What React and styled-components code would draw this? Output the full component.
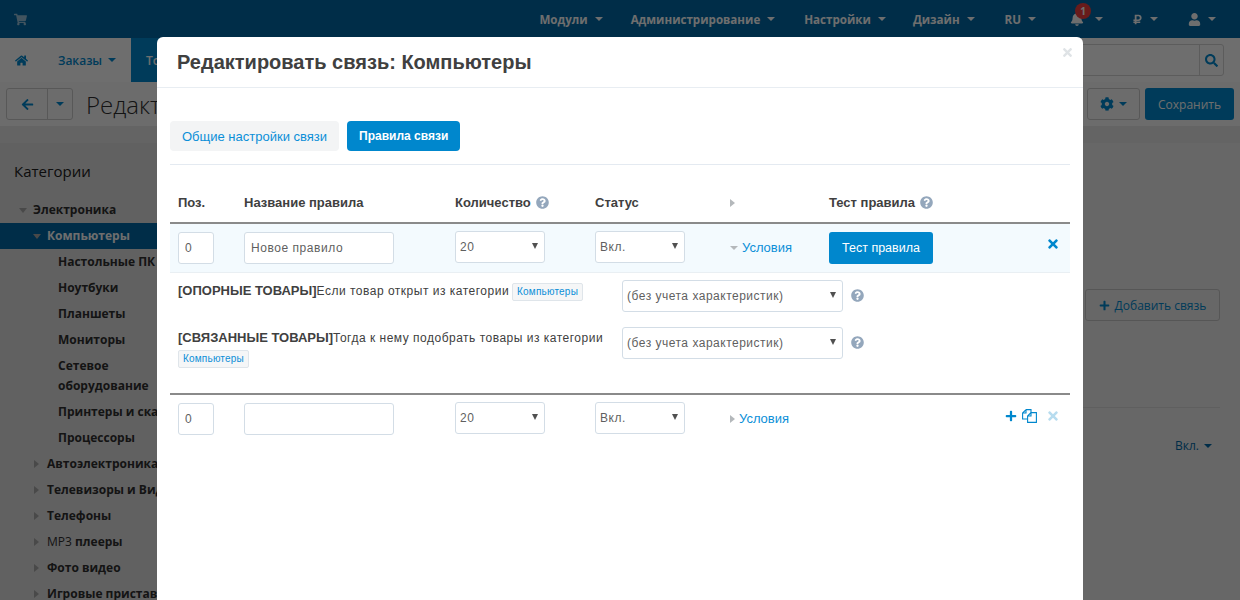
import React from "react";
import styled, { createGlobalStyle } from "styled-components";
import {
  FaShoppingCart,
  FaHome,
  FaArrowLeft,
  FaSearch,
  FaCog,
  FaBell,
  FaUser,
  FaPlus,
  FaTimes,
  FaQuestionCircle,
  FaRubleSign,
} from "react-icons/fa";

const GlobalStyle = createGlobalStyle`
  html, body {
    margin: 0;
    height: 600px;
    overflow: hidden;
    background: #fff;
    font-family: "Open Sans", sans-serif;
  }
  * { box-sizing: border-box; }
`;

// page behind the modal
const Page = styled.div`
  height: 600px;
  overflow: hidden;
  color: #404040;
`;

const TopBar = styled.div`
  height: 38px;
  background: #006aa8;
  display: flex;
  align-items: center;
  justify-content: space-between;
  padding: 0 24px 0 14px;
  color: #fff;
`;

const CartIcon = styled.span`
  display: flex;
  opacity: 0.6;
`;

const TopMenu = styled.div`
  display: flex;
  align-items: center;
`;

const TopItem = styled.div`
  display: flex;
  align-items: center;
  gap: ${(props) => props.$inner || 7}px;
  margin-left: ${(props) => props.$gap || 30}px;
  font-size: 11.6px;
  font-weight: 700;
  position: relative;
`;

const Caret = styled.span`
  display: inline-block;
  width: 0;
  height: 0;
  border-left: 4px solid transparent;
  border-right: 4px solid transparent;
  border-top: 4px solid currentColor;
`;

const Badge = styled.span`
  position: absolute;
  left: 5px;
  top: -9px;
  width: 16px;
  height: 16px;
  border-radius: 50%;
  background: #f04040;
  color: #fff;
  font-size: 10px;
  line-height: 16px;
  text-align: center;
`;

const NavBar = styled.div`
  height: 44px;
  display: flex;
  align-items: center;
  background: #fff;
  padding-right: 16px;
`;

const NavHome = styled.div`
  width: 43px;
  padding-left: 15px;
  color: #008ad0;
  font-size: 13px;
  display: flex;
`;

const NavLink = styled.div`
  height: 44px;
  display: flex;
  align-items: center;
  gap: 6px;
  font-size: 12px;
  font-weight: 600;
  padding: 0 15px;
  color: ${(props) => (props.$active ? "#fff" : "#008ad0")};
  background: ${(props) => (props.$active ? "#008ad0" : "transparent")};
`;

const SearchBox = styled.div`
  margin-left: auto;
  width: 400px;
  height: 32px;
  display: flex;
  border: 1px solid #d5d5d5;
  border-radius: 3px;
  justify-content: flex-end;
`;

const SearchButton = styled.div`
  width: 24px;
  border-left: 1px solid #d5d5d5;
  color: #008ad0;
  font-size: 13px;
  display: flex;
  align-items: center;
  justify-content: center;
`;

const ToolBar = styled.div`
  height: 44px;
  display: flex;
  align-items: center;
  background: #fbfbfb;
  padding: 0 6px;
`;

const BackGroup = styled.div`
  display: flex;
  height: 32px;
  border: 1px solid #ccc;
  border-radius: 3px;
  color: #008ad0;
`;

const BackPart = styled.div`
  width: ${(props) => props.$width}px;
  display: flex;
  align-items: center;
  justify-content: center;
  font-size: 13px;
  & + & { border-left: 1px solid #ccc; }
`;

const PageTitle = styled.div`
  margin-left: 13px;
  font-size: 24px;
  font-weight: 300;
  color: #303030;
`;

const ToolActions = styled.div`
  margin-left: auto;
  display: flex;
  gap: 5px;
`;

const GearButton = styled.div`
  width: 53px;
  height: 32px;
  border: 1px solid #ccc;
  border-radius: 3px;
  color: #008ad0;
  display: flex;
  align-items: center;
  justify-content: center;
  gap: 5px;
  font-size: 13px;
`;

const SaveButton = styled.div`
  width: 89px;
  height: 32px;
  border-radius: 3px;
  background: #008ad0;
  color: #fff;
  font-size: 12px;
  display: flex;
  align-items: center;
  justify-content: center;
`;

const Strip = styled.div`
  height: 17px;
  background: #e8e8e8;
`;

const Content = styled.div`
  display: flex;
`;

const Sidebar = styled.div`
  width: 200px;
  flex: none;
  background: #e0e0e0;
  height: 460px;
`;

const SideTitle = styled.div`
  font-size: 15px;
  padding: 18px 14px 0;
  height: 54px;
  color: #202020;
`;

const TreeItem = styled.div`
  display: flex;
  align-items: flex-start;
  font-size: 12px;
  font-weight: 700;
  line-height: 20px;
  padding: 3px 0 3px ${(props) => props.$indent}px;
  color: ${(props) => (props.$active ? "#fff" : "#303030")};
  background: ${(props) => (props.$active ? "#006aa8" : "transparent")};
  white-space: pre-line;
`;

const TreeLabel = styled.span`
  white-space: pre-line;
`;

const PlainPart = styled.span`
  font-weight: 400;
`;

const TreeArrow = styled.span`
  flex: none;
  width: 14px;
  &::before {
    content: "";
    display: block;
    width: 0;
    height: 0;
    ${(props) =>
      props.$open
        ? "border-left: 4px solid transparent; border-right: 4px solid transparent; border-top: 5px solid #aaa; margin-top: 8px;"
        : "border-top: 4px solid transparent; border-bottom: 4px solid transparent; border-left: 5px solid #aaa; margin-left: 1px; margin-top: 6px;"}
  }
`;

const Main = styled.div`
  flex: 1;
  display: flex;
  flex-direction: column;
  align-items: flex-end;
  background: #eeeeee;
  padding: 146px 20px 0 0;
`;

const AddLink = styled.div`
  width: 135px;
  height: 32px;
  border: 1px solid #c8c8c8;
  border-radius: 3px;
  color: #008ad0;
  font-size: 12px;
  display: flex;
  align-items: center;
  justify-content: center;
  gap: 5px;
`;

const MainRule = styled.div`
  width: 200px;
  margin-top: 86px;
  border-top: 1px solid #dcdcdc;
`;

const StateLabel = styled.div`
  margin: 29px 8px 0 0;
  font-size: 12px;
  color: #006aa8;
  display: flex;
  align-items: center;
  gap: 5px;
`;

// modal
const Backdrop = styled.div`
  position: fixed;
  inset: 0;
  background: rgba(0, 0, 0, 0.57);
`;

const Modal = styled.div`
  position: fixed;
  left: 157px;
  top: 37px;
  width: 926px;
  height: 600px;
  background: #fff;
  border-radius: 6px 6px 0 0;
  font-family: "Liberation Sans", Arial, sans-serif;
  color: #404040;
`;

const ModalHeader = styled.div`
  height: 51px;
  padding: 12px 20px 0;
  border-bottom: 1px solid #e8edf2;
  font-size: 20px;
  font-weight: 700;
  line-height: 26px;
`;

const CloseMark = styled.div`
  position: absolute;
  right: 9px;
  top: 9px;
  color: #dfe3e6;
  font-size: 13px;
  display: flex;
`;

const ModalBody = styled.div`
  padding: 33px 13px 0;
`;

const Tabs = styled.div`
  display: flex;
  gap: 8px;
  padding-bottom: 13px;
  border-bottom: 1px solid #e4eaf1;
`;

const Tab = styled.div`
  height: 30px;
  padding: 0 12px;
  display: flex;
  align-items: center;
  border-radius: 4px;
  font-size: ${(props) => (props.$active ? 12 : 13)}px;
  font-weight: ${(props) => (props.$active ? 700 : 400)};
  color: ${(props) => (props.$active ? "#fff" : "#0b8fd8")};
  background: ${(props) => (props.$active ? "#0087cd" : "#f3f4f5")};
`;

const Row = styled.div`
  display: grid;
  grid-template-columns: 66px 211px 140px 135px 99px 1fr;
  padding: 0 10px 0 8px;
  align-items: center;
`;

const HeadRow = styled(Row)`
  height: 59px;
  padding-top: 18px;
  border-bottom: 2px solid #8a8a8a;
  font-size: 13px;
  font-weight: 700;
`;

const HeadCell = styled.div`
  display: flex;
  align-items: center;
  gap: 5px;
`;

const RuleRow = styled(Row)`
  height: ${(props) => props.$height}px;
  background: ${(props) => (props.$open ? "#f3fafe" : "#fff")};
  border-bottom: ${(props) => (props.$open ? "1px solid #e9eff3" : "none")};
`;

const Input = styled.input`
  display: block;
  height: 32px;
  width: ${(props) => props.$width}px;
  border: 1px solid #d3dde6;
  border-radius: 3px;
  background: #fff;
  padding: 0 6px;
  font: 12px "Liberation Sans", Arial, sans-serif;
  letter-spacing: 0.55px;
  color: #5f5f5f;
`;

const SelectWrap = styled.div`
  position: relative;
  width: ${(props) => props.$width}px;
  margin-top: ${(props) => props.$lift || 0}px;
  &::after {
    content: "";
    position: absolute;
    right: 7px;
    top: 12px;
    border-left: 3px solid transparent;
    border-right: 3px solid transparent;
    border-top: 6px solid #505050;
    pointer-events: none;
  }
`;

const Select = styled.select`
  appearance: none;
  display: block;
  width: 100%;
  height: 32px;
  border: 1px solid #d3dde6;
  border-radius: 3px;
  background: #fff;
  padding: 0 4px;
  font: 12px "Liberation Sans", Arial, sans-serif;
  letter-spacing: 0.5px;
  color: #5f5f5f;
`;

const ConditionLink = styled.div`
  display: flex;
  align-items: center;
  gap: 4px;
  font-size: 13px;
  color: #0b8fd8;
  margin-top: -1px;
`;

const ArrowRight = styled.span`
  display: inline-block;
  width: 0;
  height: 0;
  border-top: 4px solid transparent;
  border-bottom: 4px solid transparent;
  border-left: 5px solid #b4b8bb;
`;

const ArrowDown = styled.span`
  display: inline-block;
  width: 0;
  height: 0;
  border-left: 4px solid transparent;
  border-right: 4px solid transparent;
  border-top: 4px solid #b4b8bb;
`;

const TestCell = styled.div`
  display: flex;
  justify-content: space-between;
`;

const TestButton = styled.div`
  width: 104px;
  height: 32px;
  border-radius: 3px;
  background: #0087cd;
  color: #fff;
  font-size: 12.5px;
  display: flex;
  align-items: center;
  justify-content: center;
`;

const RowActions = styled.div`
  display: flex;
  justify-content: flex-end;
  align-items: center;
  gap: 5px;
  height: 24px;
  margin-top: ${(props) => props.$top}px;
  color: #0087cd;
  font-size: 14px;
`;

const FadedX = styled.span`
  display: flex;
  margin-left: 4px;
  color: #b7dcef;
`;

const Details = styled.div`
  padding: 7px 0 0 8px;
  height: 122px;
  border-bottom: 2px solid #8a8a8a;
`;

const DetailRow = styled.div`
  display: flex;
  margin-bottom: ${(props) => props.$mb || 0}px;
`;

const DetailText = styled.div`
  width: 444px;
  flex: none;
  padding-top: 1px;
  font-size: 12px;
  line-height: 20px;
  letter-spacing: 0.5px;
`;

const Strong = styled.b`
  font-size: 13px;
  letter-spacing: 0;
`;

const Chip = styled.span`
  display: inline-block;
  font-size: 10px;
  line-height: 16px;
  padding: 0 4px;
  color: #0b8fd8;
  background: #f5f6f7;
  border: 1px solid #dfe5ea;
  border-radius: 2px;
  margin-left: ${(props) => props.$ml || 0}px;
  letter-spacing: 0.2px;
  vertical-align: middle;
`;

const Hint = styled.span`
  display: flex;
  color: #94a7bc;
  font-size: 13px;
  margin: ${(props) => props.$top || 0}px 0 0 ${(props) => props.$left || 0}px;
`;

const tree = [
  { text: "Компьютеры", indent: 33, open: true, active: true },
  { text: "Настольные ПК", indent: 58, leaf: true },
  { text: "Ноутбуки", indent: 58, leaf: true },
  { text: "Планшеты", indent: 58, leaf: true },
  { text: "Мониторы", indent: 58, leaf: true },
  { text: "Сетевое\nоборудование", indent: 58, leaf: true },
  { text: "Принтеры и сканеры", indent: 58, leaf: true },
  { text: "Процессоры", indent: 58, leaf: true },
  { text: "Автоэлектроника", indent: 33 },
  { text: "Телевизоры и Видео", indent: 33 },
  { text: "Телефоны", indent: 33 },
  { text: "плееры", plain: "MP3 ", indent: 33 },
  { text: "Фото видео", indent: 33 },
  { text: "Игровые приставки", indent: 33 },
];

function CopyIcon() {
  return (
    <svg width="15" height="14" viewBox="0 0 15 14" fill="none" stroke="currentColor" strokeWidth="1.1">
      <path d="M4 .6H9V3.6M4 .6L.6 4V10H5.6M4 .6V4H.6" />
      <path d="M9 3.6H14.4V13.4H5.6V7L9 3.6ZM9 3.6V7H5.6" />
    </svg>
  );
}

function StatusSelect() {
  return (
    <SelectWrap $width={90} $lift={-2}>
      <Select defaultValue="on">
        <option value="on">Вкл.</option>
      </Select>
    </SelectWrap>
  );
}

function CountSelect() {
  return (
    <SelectWrap $width={90} $lift={-2}>
      <Select defaultValue="20">
        <option value="20">20</option>
      </Select>
    </SelectWrap>
  );
}

function FeatureSelect() {
  return (
    <SelectWrap $width={221}>
      <Select defaultValue="none">
        <option value="none">(без учета характеристик)</option>
      </Select>
    </SelectWrap>
  );
}

export default function App() {
  return (
    <>
      <GlobalStyle />
      <Page>
        <TopBar>
          <CartIcon><FaShoppingCart size={13} /></CartIcon>
          <TopMenu>
            <TopItem>Модули <Caret /></TopItem>
            <TopItem $gap={28}>Администрирование <Caret /></TopItem>
            <TopItem $gap={29}>Настройки <Caret /></TopItem>
            <TopItem $gap={27}>Дизайн <Caret /></TopItem>
            <TopItem $gap={30}>RU <Caret /></TopItem>
            <TopItem $gap={34} $inner={11}>
              <FaBell size={14} />
              <Badge>1</Badge>
              <Caret />
            </TopItem>
            <TopItem $gap={29}><FaRubleSign size={11} /> <Caret /></TopItem>
            <TopItem $gap={30}><FaUser size={13} /> <Caret /></TopItem>
          </TopMenu>
        </TopBar>
        <NavBar>
          <NavHome><FaHome size={13} /></NavHome>
          <NavLink>Заказы <Caret /></NavLink>
          <NavLink $active>Товары <Caret /></NavLink>
          <SearchBox>
            <SearchButton><FaSearch /></SearchButton>
          </SearchBox>
        </NavBar>
        <ToolBar>
          <BackGroup>
            <BackPart $width={40}><FaArrowLeft /></BackPart>
            <BackPart $width={25}><Caret /></BackPart>
          </BackGroup>
          <PageTitle>Редактировать категорию</PageTitle>
          <ToolActions>
            <GearButton><FaCog size={14} /><Caret /></GearButton>
            <SaveButton>Сохранить</SaveButton>
          </ToolActions>
        </ToolBar>
        <Strip />
        <Content>
          <Sidebar>
            <SideTitle>Категории</SideTitle>
            <TreeItem $indent={19}>
              <TreeArrow $open />
              Электроника
            </TreeItem>
            {tree.map((item) => (
              <TreeItem key={item.text} $indent={item.indent} $active={item.active}>
                {!item.leaf && <TreeArrow $open={item.open} />}
                <TreeLabel>
                  {item.plain && <PlainPart>{item.plain}</PlainPart>}
                  {item.text}
                </TreeLabel>
              </TreeItem>
            ))}
          </Sidebar>
          <Main>
            <AddLink><FaPlus size={11} /> Добавить связь</AddLink>
            <MainRule />
            <StateLabel>Вкл. <Caret /></StateLabel>
          </Main>
        </Content>
      </Page>

      <Backdrop />
      <Modal>
        <ModalHeader>Редактировать связь: Компьютеры</ModalHeader>
        <CloseMark><FaTimes /></CloseMark>
        <ModalBody>
          <Tabs>
            <Tab>Общие настройки связи</Tab>
            <Tab $active>Правила связи</Tab>
          </Tabs>
          <HeadRow>
            <HeadCell>Поз.</HeadCell>
            <HeadCell>Название правила</HeadCell>
            <HeadCell>Количество <Hint><FaQuestionCircle /></Hint></HeadCell>
            <HeadCell>Статус</HeadCell>
            <HeadCell><ArrowRight /></HeadCell>
            <HeadCell>Тест правила <Hint><FaQuestionCircle /></Hint></HeadCell>
          </HeadRow>
          <RuleRow $open $height={49}>
            <Input $width={36} defaultValue="0" />
            <Input $width={150} defaultValue="Новое правило" />
            <CountSelect />
            <StatusSelect />
            <ConditionLink><ArrowDown /> Условия</ConditionLink>
            <TestCell>
              <TestButton>Тест правила</TestButton>
              <RowActions $top={0}><FaTimes /></RowActions>
            </TestCell>
          </RuleRow>
          <Details>
            <DetailRow $mb={15}>
              <DetailText>
                <Strong>[ОПОРНЫЕ ТОВАРЫ]</Strong>Если товар открыт из категории
                <Chip $ml={3}>Компьютеры</Chip>
              </DetailText>
              <FeatureSelect />
              <Hint $left={8} $top={9}><FaQuestionCircle /></Hint>
            </DetailRow>
            <DetailRow>
              <DetailText>
                <Strong>[СВЯЗАННЫЕ ТОВАРЫ]</Strong>Тогда к нему подобрать товары из категории{" "}
                <Chip>Компьютеры</Chip>
              </DetailText>
              <FeatureSelect />
              <Hint $left={8} $top={9}><FaQuestionCircle /></Hint>
            </DetailRow>
          </Details>
          <RuleRow $height={48}>
            <Input $width={36} defaultValue="0" />
            <Input $width={150} />
            <CountSelect />
            <StatusSelect />
            <ConditionLink><ArrowRight /> Условия</ConditionLink>
            <RowActions $top={-6}>
              <FaPlus size={12} />
              <CopyIcon />
              <FadedX><FaTimes /></FadedX>
            </RowActions>
          </RuleRow>
        </ModalBody>
      </Modal>
    </>
  );
}
